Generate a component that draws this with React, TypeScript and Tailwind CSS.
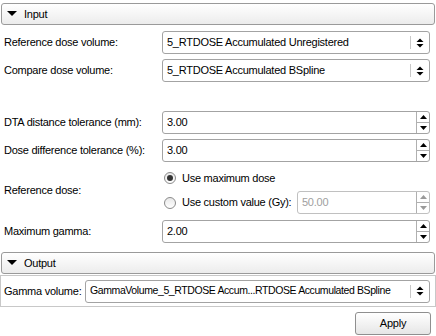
import React from "react";

function Header({ title }: { title: string }) {
  return (
    <div className="mx-[1px] h-[22px] flex items-center rounded-[3px] border border-[#9a9a9a] bg-gradient-to-b from-white to-[#ececec]">
      <svg width="10" height="6" viewBox="0 0 10 6" className="ml-[5px]">
        <polygon points="0,0 10,0 5,5" fill="#000" />
      </svg>
      <span className="ml-[7px]">{title}</span>
    </div>
  );
}

function Combo({ value, className = "", textClassName = "" }: { value: string; className?: string; textClassName?: string }) {
  return (
    <div className={`h-[23px] flex items-center rounded-[3px] border border-[#a3a3a3] bg-white min-w-0 ${className}`}>
      <span className={`flex-1 min-w-0 pl-[4px] whitespace-nowrap overflow-hidden ${textClassName}`}>{value}</span>
      <div className="w-px h-[13px] bg-[#c8c8c8] shrink-0" />
      <svg width="8" height="10" viewBox="0 0 8 10" className="mx-[5px] shrink-0">
        <polygon points="0.5,4 7.5,4 4,0.5" fill="#000" />
        <polygon points="0.5,6 7.5,6 4,9.5" fill="#000" />
      </svg>
    </div>
  );
}

function Spin({ value, disabled = false, className = "" }: { value: string; disabled?: boolean; className?: string }) {
  const arrow = disabled ? "#9a9a9a" : "#000";
  return (
    <div className={`h-[23px] flex rounded-[3px] border ${disabled ? "border-[#c0c0c0]" : "border-[#a3a3a3]"} bg-white ${className}`}>
      <span className={`flex-1 flex items-center pl-[4px] ${disabled ? "text-[#a0a0a0]" : ""}`}>{value}</span>
      <div className="w-[13px] flex flex-col border-l border-[#b0b0b0]">
        <div className="flex-1 flex items-center justify-center border-b border-[#b0b0b0]">
          <svg width="7" height="4" viewBox="0 0 7 4">
            <polygon points="0,4 7,4 3.5,0" fill={arrow} />
          </svg>
        </div>
        <div className="flex-1 flex items-center justify-center">
          <svg width="7" height="4" viewBox="0 0 7 4">
            <polygon points="0,0 7,0 3.5,4" fill={arrow} />
          </svg>
        </div>
      </div>
    </div>
  );
}

function Radio({ checked }: { checked: boolean }) {
  return (
    <div className="w-[12px] h-[12px] rounded-full border border-[#8a8a8a] bg-gradient-to-b from-[#e8e8e8] to-white flex items-center justify-center shrink-0">
      {checked && <div className="w-[6px] h-[6px] rounded-full bg-[#333]" />}
    </div>
  );
}

function Row({ label, children, className = "" }: { label: string; children: React.ReactNode; className?: string }) {
  return (
    <div className={`flex items-center ${className}`}>
      <span className="w-[162px] pl-[4px] shrink-0">{label}</span>
      <div className="flex-1 mr-[6px]">{children}</div>
    </div>
  );
}

export default function App() {
  return (
    <div
      className="w-[436px] h-[336px] bg-white text-[11px] tracking-[-0.25px] text-[#000] flex flex-col overflow-hidden"
      style={{ fontFamily: '"Liberation Sans", Arial, sans-serif' }}
    >
      <div className="pt-[3px]">
        <Header title="Input" />
      </div>

      <Row label="Reference dose volume:" className="mt-[6px]">
        <Combo value="5_RTDOSE Accumulated Unregistered" />
      </Row>
      <Row label="Compare dose volume:" className="mt-[5px]">
        <Combo value="5_RTDOSE Accumulated BSpline" />
      </Row>

      <Row label="DTA distance tolerance (mm):" className="mt-[29px]">
        <Spin value="3.00" />
      </Row>
      <Row label="Dose difference tolerance (%):" className="mt-[5px]">
        <Spin value="3.00" />
      </Row>

      <div className="flex items-center mt-[5px]">
        <span className="w-[162px] pl-[4px] shrink-0">Reference dose:</span>
        <div className="flex-1 mr-[6px] flex flex-col">
          <div className="h-[22px] flex items-center gap-[6px] pl-[2px]">
            <Radio checked />
            <span>Use maximum dose</span>
          </div>
          <div className="flex items-center mt-[2px]">
            <div className="flex items-center gap-[6px] pl-[2px] w-[135px] shrink-0">
              <Radio checked={false} />
              <span>Use custom value (Gy):</span>
            </div>
            <Spin value="50.00" disabled className="flex-1" />
          </div>
        </div>
      </div>

      <Row label="Maximum gamma:" className="mt-[6px]">
        <Spin value="2.00" />
      </Row>

      <div className="mt-[9px]">
        <Header title="Output" />
      </div>
      <div className="mt-[1px] h-[32px] border border-[#c8c8c8] flex items-center">
        <span className="w-[84px] pl-[3px] shrink-0">Gamma volume:</span>
        <Combo
          value="GammaVolume_5_RTDOSE Accum...RTDOSE Accumulated BSpline"
          className="flex-1 mr-[5px]"
          textClassName="text-[10.5px] tracking-[-0.4px]"
        />
      </div>

      <div className="flex justify-end mt-[5px] mr-[5px]">
        <button className="w-[76px] h-[23px] rounded-[3px] border border-[#8f8f8f] bg-gradient-to-b from-white to-[#e6e6e6] text-[11px]">
          Apply
        </button>
      </div>
    </div>
  );
}
